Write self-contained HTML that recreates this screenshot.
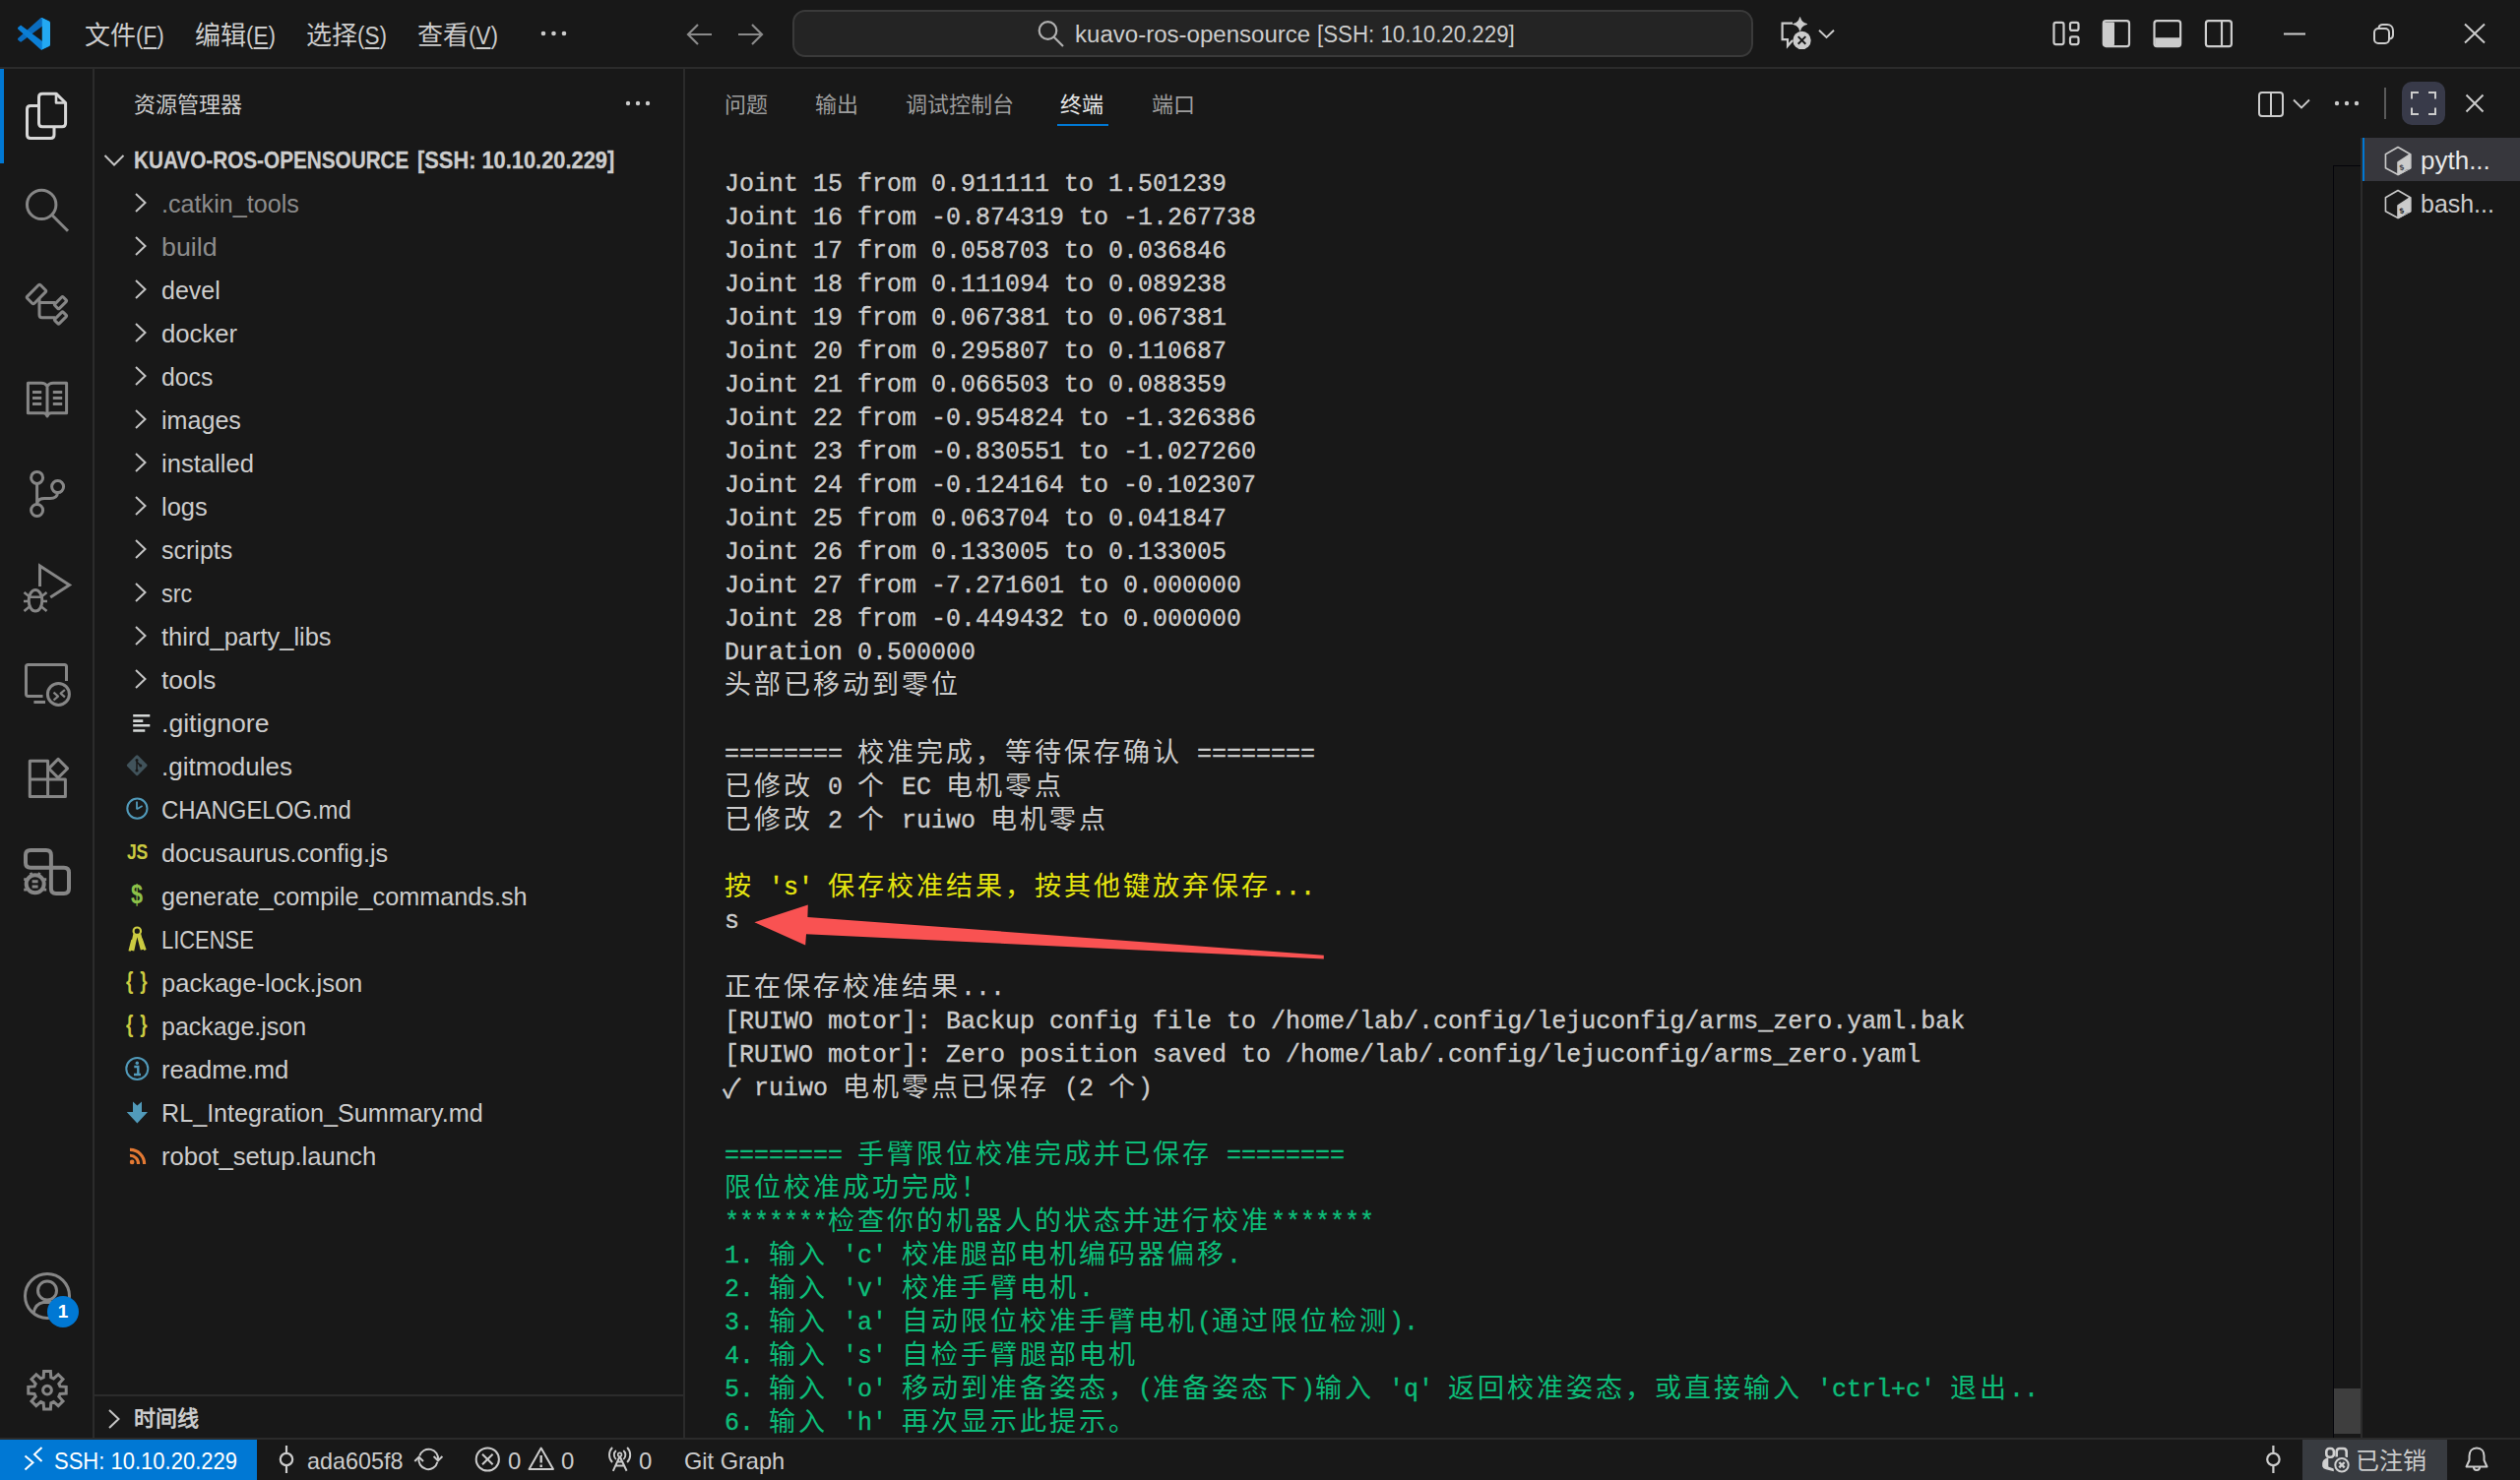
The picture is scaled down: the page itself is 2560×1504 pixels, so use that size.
<!DOCTYPE html>
<html lang="zh-CN">
<head>
<meta charset="utf-8">
<title>kuavo-ros-opensource [SSH: 10.10.20.229]</title>
<style>
*{box-sizing:border-box;margin:0;padding:0}
html,body{width:2560px;height:1504px;overflow:hidden;background:#181818}
body{position:relative;font-family:"Liberation Sans",sans-serif;color:#cccccc;-webkit-font-smoothing:antialiased}
.abs{position:absolute}
svg{position:absolute;overflow:visible}
.t{position:absolute;white-space:nowrap;line-height:1}
.cj{text-align:justify;text-align-last:justify}

/* ---------- frame ---------- */
#titlebar{left:0;top:0;width:2560px;height:70px;background:#181818;border-bottom:2px solid #2b2b2b}
#activity{left:0;top:70px;width:96px;height:1391px;background:#181818;border-right:2px solid #2b2b2b}
#sidebar{left:96px;top:70px;width:600px;height:1391px;background:#181818;border-right:2px solid #2b2b2b}
#panel{left:696px;top:70px;width:1864px;height:1391px;background:#181818}
#status{left:0;top:1461px;width:2560px;height:43px;background:#181818;border-top:2px solid #2b2b2b}

/* ---------- title bar ---------- */
.menu{top:23px;font-size:26px;color:#cccccc}
.menu .mc{display:inline-block;width:52px;white-space:nowrap;text-align:justify;text-align-last:justify;vertical-align:top}
.menu .mn{display:inline-block;font-size:25px;transform:scaleX(.9);transform-origin:0 50%}
.menu u{text-decoration-thickness:2px;text-underline-offset:3px}
#cc{left:805px;top:10px;width:976px;height:48px;border:2px solid #3a3a3a;border-radius:13px;background:#242424}
.cct{top:24px;font-size:23px;color:#cccccc;transform-origin:0 0}

/* ---------- sidebar ---------- */
.row{position:absolute;left:96px;width:598px;height:44px}
.row .lbl{position:absolute;left:68px;top:1px;font-size:25px;line-height:44px;white-space:nowrap;color:#cccccc;transform-origin:0 0}
.row.dim .lbl{color:#8c8c8c}
.row .chev{left:39px;top:11px;width:16px;height:22px}
.row .fi{left:30px;top:9px;width:26px;height:26px}

/* ---------- terminal ---------- */
#term{left:736px;top:171px;font-family:"Liberation Mono",monospace;font-size:25px;line-height:34px;color:#cccccc;position:absolute;-webkit-text-stroke:.35px}
#term div{height:34.035px;white-space:pre}
#term b{-webkit-text-stroke:0;display:inline-block;white-space:nowrap;text-align:justify;text-align-last:justify;font-weight:normal;font-size:27px;letter-spacing:3px;line-height:34px;height:34px;vertical-align:top}
#term .c1{width:30px}#term .c2{width:60px}#term .c3{width:90px}#term .c4{width:120px}#term .c5{width:150px}#term .c6{width:180px}#term .c7{width:210px}#term .c8{width:240px}#term .c9{width:270px}#term .c10{width:300px}#term .c11{width:330px}#term .c12{width:360px}#term .c15{width:450px}
#term .y{color:#e5e510}
#term .g{color:#0dbc79}
#term .ck{display:inline-block;width:15px;font-size:27px;line-height:34px;vertical-align:top;text-indent:-2px;font-family:"Liberation Sans",sans-serif}

/* ---------- status ---------- */
.st{top:1473px;font-size:24px;color:#cccccc;transform-origin:0 0}
</style>
</head>
<body>

<!-- ================= TITLE BAR ================= -->
<div class="abs" id="titlebar"></div>

<!-- vscode logo -->
<svg style="left:18px;top:18px" width="33" height="32.5" viewBox="0 0 100 100" preserveAspectRatio="none">
<path d="M96.46 10.8L75.86 0.88C73.47 -0.27 70.62 0.21 68.75 2.08L1.3 63.58C-0.52 65.24 -0.51 68.09 1.3 69.75L6.81 74.75C8.3 76.1 10.53 76.2 12.13 74.99L93.36 13.37C96.09 11.3 100 13.25 100 16.67V16.43C100 14.03 98.62 11.84 96.46 10.8Z" fill="#0a6cbf"/>
<path d="M96.46 89.2L75.86 99.12C73.47 100.27 70.62 99.79 68.75 97.92L1.3 36.42C-0.52 34.76 -0.51 31.91 1.3 30.25L6.81 25.25C8.3 23.9 10.53 23.8 12.13 25.01L93.36 86.63C96.09 88.7 100 86.75 100 83.33V83.57C100 85.97 98.62 88.16 96.46 89.2Z" fill="#0b7fd6"/>
<path d="M75.86 99.13C73.47 100.27 70.62 99.79 68.75 97.92C71.06 100.22 75 98.59 75 95.33V4.67C75 1.41 71.06 -0.22 68.75 2.08C70.62 0.21 73.47 -0.27 75.86 0.87L96.46 10.78C98.62 11.82 100 14.01 100 16.41V83.59C100 85.99 98.62 88.18 96.46 89.22L75.86 99.13Z" fill="#23a9f2"/>
</svg>
<div class="t menu" style="left:86px"><span class="mc">文件</span><span class="mn">(<u>F</u>)</span></div>
<div class="t menu" style="left:198px"><span class="mc">编辑</span><span class="mn">(<u>E</u>)</span></div>
<div class="t menu" style="left:311px"><span class="mc">选择</span><span class="mn">(<u>S</u>)</span></div>
<div class="t menu" style="left:424px"><span class="mc">查看</span><span class="mn">(<u>V</u>)</span></div>
<!-- menu overflow dots -->
<svg style="left:548px;top:30px" width="30" height="8" viewBox="0 0 30 8"><circle cx="4" cy="4" r="2.3" fill="#ccc"/><circle cx="14.5" cy="4" r="2.3" fill="#ccc"/><circle cx="25" cy="4" r="2.3" fill="#ccc"/></svg>
<!-- nav arrows -->
<svg style="left:697px;top:23px" width="28" height="24" viewBox="0 0 28 24" fill="none" stroke="#8a8a8a" stroke-width="2.2"><path d="M12 2 L2 12 L12 22 M2 12 H26"/></svg>
<svg style="left:748px;top:23px" width="28" height="24" viewBox="0 0 28 24" fill="none" stroke="#8a8a8a" stroke-width="2.2"><path d="M16 2 L26 12 L16 22 M26 12 H2"/></svg>
<!-- command center -->
<div class="abs" id="cc"></div>
<svg style="left:1054px;top:21px" width="28" height="28" viewBox="0 0 28 28" fill="none" stroke="#b0b0b0" stroke-width="2.2"><circle cx="10.5" cy="10" r="8.8"/><path d="M16.5 16.5 L26 26"/></svg>
<div class="t cct" style="left:1092px;transform:scaleX(1.045)">kuavo-ros-opensource</div><div class="t cct" style="left:1338px;transform:scaleX(.969)">[SSH: 10.10.20.229]</div>
<!-- copilot / chat icon -->
<svg style="left:1806px;top:16px" width="40" height="36" viewBox="0 0 40 36" fill="none" stroke="#cccccc" stroke-width="2.2"><path d="M15 7.7 H4.6 V24.2 H10 V30.8 L15 25"/><path d="M22.6 1.5 Q23.9 7.2 29.8 8.5 Q23.9 9.8 22.6 15.5 Q21.3 9.8 15.4 8.5 Q21.3 7.2 22.6 1.5Z" fill="#cccccc" stroke="#cccccc" stroke-width="0.8" stroke-linejoin="round"/><circle cx="24.5" cy="24.9" r="9.2" fill="#cccccc" stroke="none"/><path d="M20.7 21.1 L28.3 28.7 M28.3 21.1 L20.7 28.7" stroke="#181818" stroke-width="2"/></svg>
<svg style="left:1847px;top:29px" width="17" height="11" viewBox="0 0 17 11" fill="none" stroke="#cccccc" stroke-width="1.9"><path d="M1 1.8 L8.5 9 L16 1.8"/></svg>
<!-- layout controls -->
<svg style="left:2085px;top:21px" width="28" height="27" viewBox="0 0 28 27" fill="none" stroke="#cccccc" stroke-width="2.2"><rect x="1.5" y="1.9" width="10" height="22.2" rx="2"/><rect x="18" y="1.9" width="8.5" height="8" rx="2"/><rect x="18" y="16.3" width="8.5" height="7.8" rx="2"/></svg>
<svg style="left:2135px;top:20px" width="30" height="28" viewBox="0 0 30 28" fill="none" stroke="#cccccc" stroke-width="2.2"><rect x="1.8" y="1.1" width="26.2" height="26" rx="2.6"/><path d="M2 3 H12.5 V25.5 H2Z" fill="#cccccc" stroke-width="1"/></svg>
<svg style="left:2187px;top:20px" width="30" height="28" viewBox="0 0 30 28" fill="none" stroke="#cccccc" stroke-width="2.2"><rect x="1.5" y="1.1" width="26.6" height="26" rx="2.6"/><path d="M3 19 H26.5 V25.5 H3Z" fill="#cccccc" stroke-width="1.6"/></svg>
<svg style="left:2239px;top:20px" width="30" height="28" viewBox="0 0 30 28" fill="none" stroke="#cccccc" stroke-width="2.2"><rect x="1.9" y="1.1" width="26" height="26" rx="2.6"/><path d="M18 2 V26"/></svg>
<!-- window controls -->
<svg style="left:2320px;top:33px" width="22" height="3" viewBox="0 0 22 3"><rect width="22" height="2" y="0.5" fill="#cccccc"/></svg>
<svg style="left:2411px;top:24px" width="21" height="21" viewBox="0 0 21 21" fill="none" stroke="#cccccc" stroke-width="2"><rect x="1" y="5" width="15" height="15" rx="4"/><path d="M5.5 4 C6 2 7.5 1 9.5 1 H14 C17.5 1 20 3.5 20 7 V11.5 C20 13.5 19 15 17 15.5"/></svg>
<svg style="left:2503px;top:24px" width="22" height="20" viewBox="0 0 22 20" fill="none" stroke="#cccccc" stroke-width="2"><path d="M1 0.5 L21 19.5 M21 0.5 L1 19.5"/></svg>
<!--TITLE-->

<!-- ================= ACTIVITY BAR ================= -->
<div class="abs" id="activity"></div>

<div class="abs" style="left:0;top:70px;width:4px;height:96px;background:#0078d4"></div>
<!-- explorer (active) -->
<svg style="left:0;top:70px" width="96" height="96" viewBox="0 70 96 96" fill="none" stroke="#d7d7d7" stroke-width="3" stroke-linejoin="round"><path d="M38 107.5 H31 Q27.5 107.5 27.5 111 V137 Q27.5 140.5 31 140.5 H51.5 Q55 140.5 55 137 V130"/><path d="M43 95.2 H57 L66.6 104.5 V125.3 Q66.6 128.8 63.1 128.8 H43 Q39.5 128.8 39.5 125.3 V98.7 Q39.5 95.2 43 95.2Z"/><path d="M57 95.5 V104.5 H66.5" stroke-width="2.6"/></svg>
<!-- search -->
<svg style="left:0;top:166px" width="96" height="96" viewBox="0 166 96 96" fill="none" stroke="#868686" stroke-width="3"><circle cx="42.2" cy="207.9" r="14.7"/><path d="M52.8 218.5 L69 234.8"/></svg>
<!-- flow -->
<svg style="left:0;top:262px" width="96" height="96" viewBox="0 262 96 96" fill="none" stroke="#868686" stroke-width="3" stroke-linejoin="round"><rect x="27.5" y="294" width="19" height="10" rx="1.5" transform="rotate(-45 37 299)"/><rect x="55.5" y="304.5" width="12" height="6.4" rx="1.2" transform="rotate(-45 61.5 307.7)"/><rect x="55.5" y="319.8" width="12" height="6.4" rx="1.2" transform="rotate(-45 61.5 323)"/><path d="M40 303.5 V320 Q40 322.7 42.7 322.7 H56 M40 307.4 H56"/></svg>
<!-- book -->
<svg style="left:0;top:358px" width="96" height="96" viewBox="0 358 96 96" fill="none" stroke="#868686" stroke-width="3" stroke-linejoin="round"><path d="M48 392.5 Q46 389.3 42 389.3 H28.4 V419.8 H44 Q47 419.8 48 423 Q49 419.8 52 419.8 H67.6 V389.3 H54 Q50 389.3 48 392.5 V422"/><path d="M33 398.5 H42.2 M33 404.5 H42.2 M33 410.5 H42.2 M53.8 398.5 H63.2 M53.8 404.5 H63.2 M53.8 410.5 H63.2" stroke-width="2.8"/></svg>
<!-- source control -->
<svg style="left:0;top:454px" width="96" height="96" viewBox="0 454 96 96" fill="none" stroke="#868686" stroke-width="3"><circle cx="37.6" cy="485.4" r="6"/><circle cx="58.6" cy="494.6" r="6"/><circle cx="37.6" cy="518.5" r="6"/><path d="M37.6 491.4 V512.5 M58.6 500.6 Q58 506.5 51 506.5 H45 Q38 506.5 37.6 512.5"/></svg>
<!-- run and debug -->
<svg style="left:0;top:550px" width="96" height="96" viewBox="0 550 96 96" fill="none" stroke="#868686" stroke-width="3"><path d="M40.5 596 V575 L70.5 594.4 L51.2 607"/><ellipse cx="36" cy="610.3" rx="6.8" ry="10.8"/><path d="M29.5 606.8 H42.5 M24.5 602 L29.5 606 M24 611 H29 M24.5 621 L30 616.5 M47.5 602 L42.5 606 M48 611 H43 M47.5 621 L42 616.5" stroke-width="2.6"/></svg>
<!-- remote explorer -->
<svg style="left:0;top:646px" width="96" height="96" viewBox="0 646 96 96" fill="none" stroke="#868686" stroke-width="3" stroke-linejoin="round"><path d="M67.5 692 V677.5 Q67.5 675.4 65.4 675.4 H28.6 Q26.5 675.4 26.5 677.5 V705.3 Q26.5 707.4 28.6 707.4 H43.5"/><path d="M34.4 713.5 H46"/><circle cx="59.4" cy="705.4" r="11"/><path d="M54.5 703.7 L59 707.6 L54.5 711.5 M65.9 701 L61.6 704.6 L65.9 708.3" stroke-width="2.2"/></svg>
<!-- extensions -->
<svg style="left:0;top:742px" width="96" height="96" viewBox="0 742 96 96" fill="none" stroke="#868686" stroke-width="3" stroke-linejoin="round"><path d="M30.3 773.3 H48.6 V792 H66.4 V809.5 H30.3Z M30.3 792 H48.6 V809.5"/><rect x="52.4" y="774.2" width="13.4" height="13.4" transform="rotate(45 59.1 780.9)"/></svg>
<!-- project/ros -->
<svg style="left:0;top:838px" width="96" height="96" viewBox="0 838 96 96" fill="none" stroke="#868686" stroke-width="4" stroke-linejoin="round"><path d="M51.9 881.8 H31 Q26 881.8 26 876.8 V869 Q26 864 31 864 H46.9 Q51.9 864 51.9 869 V903 Q51.9 908 56.9 908 H65 Q70 908 70 903 V886.8 Q70 881.8 65 881.8 H51.9"/><circle cx="35.7" cy="898.3" r="9"/><path d="M32.6 895.7 H38.6 M32.6 901 H38.6" stroke-width="3"/><path d="M31 886.8 L33 890.5 M40.4 886.8 L38.4 890.5 M24.2 893.6 H27.2 M44.2 893.6 H47.2 M24.2 904.2 H27.2 M44.2 904.2 H47.2" stroke-width="2.8"/></svg>
<!-- account -->
<svg style="left:0;top:1268px" width="96" height="96" viewBox="0 1268 96 96" fill="none" stroke="#868686" stroke-width="3"><circle cx="48" cy="1317" r="22.5"/><circle cx="48" cy="1311.5" r="9.5"/><path d="M34 1334.5 Q36 1324.5 44 1323.5 H52 Q60 1324.5 62 1334.5"/><circle cx="64" cy="1333" r="16" fill="#0078d4" stroke="none"/></svg>
<div class="t" style="left:48px;top:1323px;width:32px;text-align:center;font-size:19px;font-weight:bold;color:#fff">1</div>
<!-- gear -->
<svg style="left:0;top:1364px" width="96" height="96" viewBox="-48 -48.7 96 96" fill="none" stroke="#868686" stroke-width="3" stroke-linejoin="miter"><path d="M-3.8 -13.0 L-3.4 -19.2 L3.4 -19.2 L3.8 -13.0 L6.5 -11.8 L11.2 -16.0 L16.0 -11.2 L11.8 -6.5 L13.0 -3.8 L19.2 -3.4 L19.2 3.4 L13.0 3.8 L11.8 6.5 L16.0 11.2 L11.2 16.0 L6.5 11.8 L3.8 13.0 L3.4 19.2 L-3.4 19.2 L-3.8 13.0 L-6.5 11.8 L-11.2 16.0 L-16.0 11.2 L-11.8 6.5 L-13.0 3.8 L-19.2 3.4 L-19.2 -3.4 L-13.0 -3.8 L-11.8 -6.5 L-16.0 -11.2 L-11.2 -16.0 L-6.5 -11.8Z"/><circle cx="0" cy="0" r="4.4"/></svg>
<!--ACTIVITY-->

<!-- ================= SIDEBAR ================= -->
<div class="abs" id="sidebar"></div>

<div class="t cj" style="left:136px;top:96px;font-size:22px;color:#cccccc;width:110px">资源管理器</div>
<svg style="left:634px;top:101px" width="28" height="8" viewBox="0 0 28 8"><circle cx="4" cy="4" r="2.2" fill="#ccc"/><circle cx="14" cy="4" r="2.2" fill="#ccc"/><circle cx="24" cy="4" r="2.2" fill="#ccc"/></svg>
<svg style="left:105px;top:156px" width="22" height="14" viewBox="0 0 22 14" fill="none" stroke="#c5c5c5" stroke-width="2"><path d="M1.5 2 L11 11.5 L20.5 2"/></svg>
<div class="t" style="left:136px;top:152px;font-size:23px;font-weight:bold;color:#cccccc;-webkit-text-stroke:.3px;transform:scaleX(.901);transform-origin:0 0">KUAVO-ROS-OPENSOURCE</div><div class="t" style="left:424px;top:152px;font-size:23px;font-weight:bold;color:#cccccc;-webkit-text-stroke:.3px;transform:scaleX(.949);transform-origin:0 0">[SSH: 10.10.20.229]</div>

<div class="row dim" style="top:184px"><svg class="chev" viewBox="0 0 16 22" fill="none" stroke="#c5c5c5" stroke-width="2"><path d="M3 2 L12.5 11 L3 20"/></svg><div class="lbl" style="transform:scaleX(1.007)">.catkin_tools</div></div>
<div class="row dim" style="top:228px"><svg class="chev" viewBox="0 0 16 22" fill="none" stroke="#c5c5c5" stroke-width="2"><path d="M3 2 L12.5 11 L3 20"/></svg><div class="lbl" style="transform:scaleX(1.071)">build</div></div>
<div class="row" style="top:272px"><svg class="chev" viewBox="0 0 16 22" fill="none" stroke="#c5c5c5" stroke-width="2"><path d="M3 2 L12.5 11 L3 20"/></svg><div class="lbl" style="transform:scaleX(0.999)">devel</div></div>
<div class="row" style="top:316px"><svg class="chev" viewBox="0 0 16 22" fill="none" stroke="#c5c5c5" stroke-width="2"><path d="M3 2 L12.5 11 L3 20"/></svg><div class="lbl" style="transform:scaleX(1.027)">docker</div></div>
<div class="row" style="top:360px"><svg class="chev" viewBox="0 0 16 22" fill="none" stroke="#c5c5c5" stroke-width="2"><path d="M3 2 L12.5 11 L3 20"/></svg><div class="lbl" style="transform:scaleX(0.99)">docs</div></div>
<div class="row" style="top:404px"><svg class="chev" viewBox="0 0 16 22" fill="none" stroke="#c5c5c5" stroke-width="2"><path d="M3 2 L12.5 11 L3 20"/></svg><div class="lbl" style="transform:scaleX(1.004)">images</div></div>
<div class="row" style="top:448px"><svg class="chev" viewBox="0 0 16 22" fill="none" stroke="#c5c5c5" stroke-width="2"><path d="M3 2 L12.5 11 L3 20"/></svg><div class="lbl" style="transform:scaleX(1.024)">installed</div></div>
<div class="row" style="top:492px"><svg class="chev" viewBox="0 0 16 22" fill="none" stroke="#c5c5c5" stroke-width="2"><path d="M3 2 L12.5 11 L3 20"/></svg><div class="lbl" style="transform:scaleX(1.018)">logs</div></div>
<div class="row" style="top:536px"><svg class="chev" viewBox="0 0 16 22" fill="none" stroke="#c5c5c5" stroke-width="2"><path d="M3 2 L12.5 11 L3 20"/></svg><div class="lbl" style="transform:scaleX(1.0)">scripts</div></div>
<div class="row" style="top:580px"><svg class="chev" viewBox="0 0 16 22" fill="none" stroke="#c5c5c5" stroke-width="2"><path d="M3 2 L12.5 11 L3 20"/></svg><div class="lbl" style="transform:scaleX(0.933)">src</div></div>
<div class="row" style="top:624px"><svg class="chev" viewBox="0 0 16 22" fill="none" stroke="#c5c5c5" stroke-width="2"><path d="M3 2 L12.5 11 L3 20"/></svg><div class="lbl" style="transform:scaleX(1.018)">third_party_libs</div></div>
<div class="row" style="top:668px"><svg class="chev" viewBox="0 0 16 22" fill="none" stroke="#c5c5c5" stroke-width="2"><path d="M3 2 L12.5 11 L3 20"/></svg><div class="lbl" style="transform:scaleX(1.047)">tools</div></div>
<div class="row" style="top:712px"><svg class="fi" viewBox="0 0 26 26"><path d="M8.9 4.6 H26 M8.9 10 H19 M8.9 14.7 H26 M8.9 19.9 H21" stroke="#d4d7d6" stroke-width="2.6" fill="none" transform="translate(0.3,1.6)"/></svg><div class="lbl" style="transform:scaleX(1.065)">.gitignore</div></div>
<div class="row" style="top:756px"><svg class="fi" viewBox="0 0 26 26"><rect x="5.4" y="4.9" width="15.6" height="15.6" rx="1.5" transform="rotate(45 13.2 12.7)" fill="#41535b"/><g fill="none" stroke="#181818" stroke-width="1.5"><path d="M13 8 V18 M13.3 9.5 L16.5 12.7"/></g><circle cx="13" cy="7.6" r="1.5" fill="#181818"/><circle cx="13" cy="18" r="1.6" fill="#181818"/><circle cx="16.8" cy="13" r="1.5" fill="#181818"/></svg><div class="lbl" style="transform:scaleX(1.041)">.gitmodules</div></div>
<div class="row" style="top:800px"><svg class="fi" viewBox="0 0 26 26" fill="none" stroke="#519aba" stroke-width="2"><circle cx="13.4" cy="12.6" r="10.1"/><path d="M13 13.5 V5.5 M13 13.2 L18.6 10" stroke-width="1.8"/></svg><div class="lbl" style="transform:scaleX(0.957)">CHANGELOG.md</div></div>
<div class="row" style="top:844px"><div class="t" style="left:33px;top:11px;font-size:22px;font-weight:bold;color:#cbcb41;transform:scaleX(.8);transform-origin:0 0;letter-spacing:-0.5px">JS</div><div class="lbl" style="transform:scaleX(1.01)">docusaurus.config.js</div></div>
<div class="row" style="top:888px"><div class="t" style="left:37px;top:8px;font-size:27px;font-weight:bold;color:#8dc149;transform:scaleX(.8);transform-origin:0 0">$</div><div class="lbl" style="transform:scaleX(1.009)">generate_compile_commands.sh</div></div>
<div class="row" style="top:932px"><svg class="fi" viewBox="0 0 26 26" fill="none" stroke="#cbcb41"><circle cx="13.3" cy="5.2" r="3.7" stroke-width="2.2"/><path d="M11.6 8.5 L8 25 M15 8.5 L19 24" stroke-width="4.6"/><path d="M8.5 14 L5.6 25.5 M17.5 13 L21.5 24.5" stroke-width="2.4"/></svg><div class="lbl" style="transform:scaleX(0.877)">LICENSE</div></div>
<div class="row" style="top:976px"><div class="t" style="left:32px;top:10px;font-size:23px;font-weight:bold;color:#cbcb41;letter-spacing:1px;transform:scaleX(.82);transform-origin:0 0">{ }</div><div class="lbl" style="transform:scaleX(1.021)">package-lock.json</div></div>
<div class="row" style="top:1020px"><div class="t" style="left:32px;top:10px;font-size:23px;font-weight:bold;color:#cbcb41;letter-spacing:1px;transform:scaleX(.82);transform-origin:0 0">{ }</div><div class="lbl" style="transform:scaleX(0.998)">package.json</div></div>
<div class="row" style="top:1064px"><svg class="fi" viewBox="0 0 26 26" fill="none" stroke="#519aba" stroke-width="2"><circle cx="13.3" cy="13" r="11"/><circle cx="13.3" cy="7.3" r="1.7" fill="#519aba" stroke="none"/><path d="M10.3 11 H14.3 V18.8 M10 19 H17" stroke-width="2.4"/></svg><div class="lbl" style="transform:scaleX(1.023)">readme.md</div></div>
<div class="row" style="top:1108px"><svg class="fi" viewBox="0 0 26 26"><path d="M9 2.5 L13.4 6.5 L18 2.5 V13 H24 L13.4 24.5 L2.7 13 H9Z" fill="#519aba"/></svg><div class="lbl" style="transform:scaleX(1.006)">RL_Integration_Summary.md</div></div>
<div class="row" style="top:1152px"><svg class="fi" viewBox="0 0 26 26" fill="none" stroke="#e37933" stroke-width="3.6"><g transform="translate(1.2,3) scale(0.87)"><circle cx="8" cy="19.5" r="2.7" fill="#e37933" stroke="none"/><path d="M5.5 11.8 A9.5 9.5 0 0 1 15.3 21.8 M5.5 5 A16.5 16.5 0 0 1 22.3 21.8"/></g></svg><div class="lbl" style="transform:scaleX(1.026)">robot_setup.launch</div></div>

<div class="abs" style="left:96px;top:1417px;width:598px;height:2px;background:#2b2b2b"></div>
<svg style="left:109px;top:1431px" width="14" height="22" viewBox="0 0 14 22" fill="none" stroke="#c5c5c5" stroke-width="2"><path d="M2 2 L11.5 11 L2 20"/></svg>
<div class="t cj" style="left:136px;top:1431px;font-size:22px;font-weight:bold;color:#cccccc;width:66px">时间线</div>
<!--SIDEBAR-->

<!-- ================= PANEL ================= -->
<div class="abs" id="panel"></div>

<!-- panel tabs -->
<div class="t cj" style="left:736px;top:96px;font-size:22px;color:#9d9d9d;width:44px">问题</div>
<div class="t cj" style="left:828px;top:96px;font-size:22px;color:#9d9d9d;width:44px">输出</div>
<div class="t cj" style="left:920px;top:96px;font-size:22px;color:#9d9d9d;width:110px">调试控制台</div>
<div class="t cj" style="left:1077px;top:96px;font-size:22px;color:#e7e7e7;width:44px">终端</div>
<div class="abs" style="left:1074px;top:126px;width:52px;height:2px;background:#0078d4"></div>
<div class="t cj" style="left:1170px;top:96px;font-size:22px;color:#9d9d9d;width:44px">端口</div>
<!-- panel actions -->
<svg style="left:2294px;top:93px" width="26" height="26" viewBox="0 0 26 26" fill="none" stroke="#cccccc" stroke-width="2"><rect x="1" y="1" width="24" height="24" rx="3"/><path d="M13 1 V25"/></svg>
<svg style="left:2329px;top:100px" width="18" height="11" viewBox="0 0 18 11" fill="none" stroke="#cccccc" stroke-width="1.8"><path d="M1 1.5 L9 9.5 L17 1.5"/></svg>
<svg style="left:2370px;top:101px" width="28" height="8" viewBox="0 0 28 8"><circle cx="4" cy="4" r="2.2" fill="#ccc"/><circle cx="14" cy="4" r="2.2" fill="#ccc"/><circle cx="24" cy="4" r="2.2" fill="#ccc"/></svg>
<div class="abs" style="left:2422px;top:89px;width:2px;height:32px;background:#5a5a5a"></div>
<div class="abs" style="left:2440px;top:83px;width:44px;height:44px;border-radius:10px;background:#383a49"></div>
<svg style="left:2449px;top:93px" width="26" height="24" viewBox="0 0 26 24" fill="none" stroke="#cccccc" stroke-width="2"><path d="M1 7.5 V1 H8 M18 1 H25 V7.5 M25 16.5 V23 H18 M8 23 H1 V16.5"/></svg>
<svg style="left:2505px;top:96px" width="18" height="18" viewBox="0 0 18 18" fill="none" stroke="#cccccc" stroke-width="2"><path d="M0.5 0.5 L17.5 17.5 M17.5 0.5 L0.5 17.5"/></svg>

<!-- scrollbar / overview ruler -->
<div class="abs" style="left:2370px;top:168px;width:28px;height:1px;background:#04040a"></div>
<div class="abs" style="left:2370px;top:168px;width:1px;height:1293px;background:#04040a"></div>
<div class="abs" style="left:2371px;top:1411px;width:27px;height:46px;background:#3e3e3e"></div>

<!-- terminal tabs list -->
<div class="abs" style="left:2398px;top:140px;width:2px;height:1321px;background:#2b2b2b"></div>
<div class="abs" style="left:2400px;top:140px;width:160px;height:44px;background:#37373d;border-left:2px solid #0078d4"></div>
<svg style="left:2422px;top:148px" width="29" height="31" viewBox="0 0 30 32" fill="none" stroke="#c8c8c8" stroke-width="1.7" stroke-linejoin="round"><path d="M14.5 1.5 L27.5 9 V23.5 L14.5 30.5 L1.5 23.5 V9Z"/><path d="M27.5 9 L14.5 17.5 V30.5 L27.5 23.5Z" fill="#cccccc"/><text x="16.5" y="25.5" font-family="Liberation Sans" font-size="8" font-weight="bold" fill="#37373d" stroke="none" transform="rotate(-12 20 24)">$_</text></svg>
<div class="t" style="left:2459px;top:150px;font-size:26px;color:#e7e7e7">pyth...</div>
<svg style="left:2422px;top:192px" width="29" height="31" viewBox="0 0 30 32" fill="none" stroke="#c8c8c8" stroke-width="1.7" stroke-linejoin="round"><path d="M14.5 1.5 L27.5 9 V23.5 L14.5 30.5 L1.5 23.5 V9Z"/><path d="M27.5 9 L14.5 17.5 V30.5 L27.5 23.5Z" fill="#cccccc"/><text x="16.5" y="25.5" font-family="Liberation Sans" font-size="8" font-weight="bold" fill="#181818" stroke="none" transform="rotate(-12 20 24)">$_</text></svg>
<div class="t" style="left:2459px;top:194px;font-size:26px;color:#cccccc;transform:scaleX(.96);transform-origin:0 0">bash...</div>

<!-- terminal text -->
<div id="term">
<div>Joint 15 from 0.911111 to 1.501239</div>
<div>Joint 16 from -0.874319 to -1.267738</div>
<div>Joint 17 from 0.058703 to 0.036846</div>
<div>Joint 18 from 0.111094 to 0.089238</div>
<div>Joint 19 from 0.067381 to 0.067381</div>
<div>Joint 20 from 0.295807 to 0.110687</div>
<div>Joint 21 from 0.066503 to 0.088359</div>
<div>Joint 22 from -0.954824 to -1.326386</div>
<div>Joint 23 from -0.830551 to -1.027260</div>
<div>Joint 24 from -0.124164 to -0.102307</div>
<div>Joint 25 from 0.063704 to 0.041847</div>
<div>Joint 26 from 0.133005 to 0.133005</div>
<div>Joint 27 from -7.271601 to 0.000000</div>
<div>Joint 28 from -0.449432 to 0.000000</div>
<div>Duration 0.500000</div>
<div><b class="c8">头部已移动到零位</b></div>
<div></div>
<div>======== <b class="c11">校准完成，等待保存确认</b> ========</div>
<div><b class="c3">已修改</b> 0 <b class="c1">个</b> EC <b class="c4">电机零点</b></div>
<div><b class="c3">已修改</b> 2 <b class="c1">个</b> ruiwo <b class="c4">电机零点</b></div>
<div></div>
<div class="y"><b class="c1">按</b> 's' <b class="c15">保存校准结果，按其他键放弃保存</b>...</div>
<div>s</div>
<div></div>
<div><b class="c8">正在保存校准结果</b>...</div>
<div>[RUIWO motor]: Backup config file to /home/lab/.config/lejuconfig/arms_zero.yaml.bak</div>
<div>[RUIWO motor]: Zero position saved to /home/lab/.config/lejuconfig/arms_zero.yaml</div>
<div><span class="ck">&#10003;</span> ruiwo <b class="c7">电机零点已保存</b> (2 <b class="c1">个</b>)</div>
<div></div>
<div class="g">======== <b class="c12">手臂限位校准完成并已保存</b> ========</div>
<div class="g"><b class="c9">限位校准成功完成！</b></div>
<div class="g">*******<b class="c15">检查你的机器人的状态并进行校准</b>*******</div>
<div class="g">1. <b class="c2">输入</b> 'c' <b class="c11">校准腿部电机编码器偏移</b>.</div>
<div class="g">2. <b class="c2">输入</b> 'v' <b class="c6">校准手臂电机</b>.</div>
<div class="g">3. <b class="c2">输入</b> 'a' <b class="c10">自动限位校准手臂电机</b>(<b class="c6">通过限位检测</b>).</div>
<div class="g">4. <b class="c2">输入</b> 's' <b class="c8">自检手臂腿部电机</b></div>
<div class="g">5. <b class="c2">输入</b> 'o' <b class="c8">移动到准备姿态，</b>(<b class="c5">准备姿态下</b>)<b class="c2">输入</b> 'q' <b class="c12">返回校准姿态，或直接输入</b> 'ctrl+c' <b class="c2">退出</b>..</div>
<div class="g">6. <b class="c2">输入</b> 'h' <b class="c8">再次显示此提示。</b></div>
</div>

<!-- red annotation arrow -->
<svg style="left:0;top:0" width="2560" height="1504" viewBox="0 0 2560 1504"><path d="M766.4 937.3 L820.8 919.4 L820.4 932 L1344.8 970.8 L1344.8 974.6 L819 949.2 L818.2 960.6Z" fill="#f95252"/></svg>
<!--PANEL-->

<!-- ================= STATUS BAR ================= -->
<div class="abs" id="status"></div>

<div class="abs" style="left:0;top:1463px;width:261px;height:41px;background:#0078d4"></div>
<svg style="left:24px;top:1470px" width="20" height="25" viewBox="0 0 20 25" fill="none" stroke="#ffffff" stroke-width="2"><path d="M1.5 9.5 L9.5 16.3 L1.5 23.5 M18.5 1 L11 8 L18.5 15"/></svg>
<div class="t st" style="left:55px;color:#fff;transform:scaleX(.917)">SSH: 10.10.20.229</div>
<svg style="left:282px;top:1468px" width="18" height="30" viewBox="0 0 18 30" fill="none" stroke="#cccccc" stroke-width="2.2"><circle cx="9" cy="15" r="6.2"/><path d="M9 1 V8.8 M9 21.2 V29"/></svg>
<div class="t st" style="left:312px;transform:scaleX(.975)">ada605f8</div>
<svg style="left:410px;top:1462px" width="50" height="42" viewBox="410 1462 50 42" fill="none" stroke="#cccccc" stroke-width="2"><path d="M426.3 1479.5 A9.6 9.6 0 0 1 445 1483.6 M444.4 1485.6 A9.6 9.6 0 0 1 425.6 1481.4"/><path d="M440.6 1480 L445 1484.4 L449.4 1480 M421.3 1485 L425.6 1480.6 L430 1485"/></svg>
<svg style="left:482px;top:1470px" width="26" height="26" viewBox="0 0 26 26" fill="none" stroke="#cccccc" stroke-width="2"><circle cx="13.3" cy="13" r="11.6"/><path d="M8 7.7 L18.6 18.3 M18.6 7.7 L8 18.3"/></svg>
<div class="t st" style="left:516px">0</div>
<svg style="left:536px;top:1469px" width="28" height="26" viewBox="0 0 28 26" fill="none" stroke="#cccccc" stroke-width="2" stroke-linejoin="round"><path d="M13.7 2.5 L26 24 H1.5Z"/><path d="M13.7 10 V17.5 M13.7 19.5 V22" stroke-width="2.4"/></svg>
<div class="t st" style="left:570px">0</div>
<svg style="left:617px;top:1470px" width="26" height="26" viewBox="0 0 26 26" fill="none" stroke="#cccccc" stroke-width="2"><path d="M12.6 10 L5.8 24.8 M12.6 10 L19.6 24.8 M9.4 15.4 H15.8 M7.6 19.6 H17.6"/><circle cx="12.6" cy="8.3" r="1.9" stroke-width="1.6"/><path d="M8.9 4.1 A5.7 5.7 0 0 0 8.9 12.9 M16.3 4.1 A5.7 5.7 0 0 1 16.3 12.9 M5.1 1 A10.6 10.6 0 0 0 5.1 16 M20.1 1 A10.6 10.6 0 0 1 20.1 16" stroke-width="1.9"/></svg>
<div class="t st" style="left:649px">0</div>
<div class="t st" style="left:695px;transform:scaleX(.982)">Git Graph</div>
<!-- right side -->
<svg style="left:2300px;top:1468px" width="18" height="30" viewBox="0 0 18 30" fill="none" stroke="#cccccc" stroke-width="2.2"><circle cx="9.4" cy="15" r="6.2"/><path d="M9.4 1 V8.8 M9.4 21.2 V29"/></svg>
<div class="abs" style="left:2339px;top:1463px;width:147px;height:41px;background:#383b40"></div>
<svg style="left:2350px;top:1464px" width="50" height="38" viewBox="2350 1464 50 38" fill="none" stroke="#d0d0d0" stroke-width="2.6"><rect x="2363.3" y="1472" width="7.6" height="8.8" rx="3"/><path d="M2373.7 1480.5 V1475.2 Q2373.7 1472 2376.9 1472 H2380.5 Q2383.7 1472 2383.7 1475.2 V1481"/><path d="M2364.2 1481.2 Q2359.2 1483.5 2359.2 1487 V1490.2 Q2360 1492.6 2363 1493.2 L2370.8 1495.3 V1492.6 L2365.3 1490.4 V1482Z" fill="#d0d0d0" stroke="none"/><circle cx="2379" cy="1488.7" r="9.2" fill="#383b40" stroke="none"/><circle cx="2379" cy="1488.7" r="6.7" stroke-width="2"/><path d="M2376.3 1486 L2381.7 1491.4 M2381.7 1486 L2376.3 1491.4" stroke-width="2.4"/></svg>
<div class="t cj" style="left:2393px;top:1473px;font-size:24px;color:#cccccc;width:72px">已注销</div>
<svg style="left:2504px;top:1470px" width="24" height="26" viewBox="0 0 24 26" fill="none" stroke="#cccccc" stroke-width="2" stroke-linejoin="round"><path d="M12 1.5 C7 1.5 4.5 5 4.5 9.5 V14 L1.5 20.5 H22.5 L19.5 14 V9.5 C19.5 5 17 1.5 12 1.5Z"/><path d="M9 21 A3 3 0 0 0 15 21"/></svg>
<!--STATUS-->

</body>
</html>
